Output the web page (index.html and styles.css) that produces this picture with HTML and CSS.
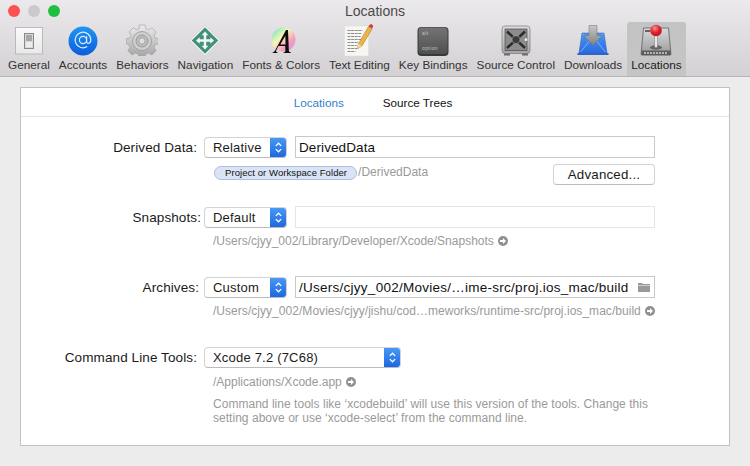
FILE: index.html
```html
<!DOCTYPE html>
<html lang="en">
<head>
<meta charset="utf-8">
<title>Locations</title>
<link rel="stylesheet" href="styles.css">
</head>
<body>
<div class="window">
  <header class="titlebar">
    <div class="title-row">
      <div class="lights"><span class="light red"></span><span class="light grey"></span><span class="light green"></span></div>
      <div class="title">Locations</div>
    </div>
    <nav class="toolbar">
      <div class="tool">
        <svg class="icon" viewBox="0 0 32 32"><defs><linearGradient id="gs" x1="0" y1="0" x2="0" y2="1"><stop offset="0" stop-color="#fafafa"/><stop offset="1" stop-color="#e9e9e9"/></linearGradient></defs><rect x="2.500" y="3.500" width="27" height="26.500" fill="url(#gs)" stroke="#b9b9b9"/><rect x="11.500" y="9.500" width="9" height="15" fill="#d8d8d8" stroke="#8a8a8a"/><rect x="13" y="11" width="6" height="6.500" fill="#a8a8a8"/><rect x="13" y="17.500" width="6" height="5.500" fill="#ececec"/></svg>
        <span>General</span>
      </div>
      <div class="tool">
        <svg class="icon" viewBox="0 0 32 32"><defs><linearGradient id="ga" x1="0" y1="0" x2="0" y2="1"><stop offset="0" stop-color="#1f95f2"/><stop offset="1" stop-color="#0a5edb"/></linearGradient></defs><circle cx="16" cy="17" r="14.500" fill="url(#ga)"/><circle cx="16" cy="16" r="3.600" fill="none" stroke="#dcecff" stroke-width="1.200"/><path d="M19.600 12.300v5.200c0 2.800 4.200 2.400 4.200-1.500a7.800 7.800 0 1 0-3.600 6.600" fill="none" stroke="#dcecff" stroke-width="1.200"/></svg>
        <span>Accounts</span>
      </div>
      <div class="tool">
        <svg class="icon" viewBox="0 0 32 32"><defs><linearGradient id="gb" x1="0" y1="0" x2="0" y2="1"><stop offset="0" stop-color="#ececec"/><stop offset="1" stop-color="#a6a6a6"/></linearGradient></defs><path d="M13 2.500h6l.8 3.700 2.900 1.200 3.200-2 4.200 4.200-2 3.200 1.200 2.900 3.700.8v4.800l-3.700.8-1.200 2.900 2 3.200-4.200 4.200-3.200-2-2.900 1.200-.8 2.400h-6l-.8-2.400-2.900-1.200-3.200 2-4.200-4.200 2-3.200-1.200-2.900L.200 21.100v-4.800l3.700-.8 1.200-2.900-2-3.200 4.200-4.200 3.200 2 2.900-1.200z" fill="url(#gb)" stroke="#8f8f8f" stroke-width=".5" transform="translate(0 -1.500)"/><circle cx="16" cy="17" r="9.500" fill="#cfcfcf" stroke="#979797" stroke-width=".8"/><circle cx="16" cy="17" r="6" fill="#bcbcbc" stroke="#8f8f8f" stroke-width=".8"/><circle cx="16" cy="17" r="3.200" fill="#dedede" stroke="#9a9a9a" stroke-width=".8"/></svg>
        <span>Behaviors</span>
      </div>
      <div class="tool">
        <svg class="icon" viewBox="0 0 32 32"><path d="M16 1 31.500 16.500 16 32 .5 16.500z" fill="#f4f4f4" stroke="#c4c4c4" stroke-width=".5"/><path d="M16 3.200 29.300 16.500 16 29.800 2.700 16.500z" fill="#44917a"/><path d="M16 7.500l3.300 3.700h-2.100v4.100h4.100v-2.100l3.700 3.300-3.700 3.300v-2.100h-4.100v4.100h2.100L16 25.500l-3.300-3.700h2.100v-4.100h-4.100v2.100L7 16.500l3.700-3.300v2.100h4.100v-4.100h-2.100z" fill="#f0f8f5"/></svg>
        <span>Navigation</span>
      </div>
      <div class="tool">
        <svg class="icon" viewBox="0 0 32 32"><defs><linearGradient id="gc" x1="0" y1="0" x2="1" y2="1"><stop offset="0" stop-color="#52e6c6"/><stop offset=".4" stop-color="#f9f5b4"/><stop offset=".7" stop-color="#f79ac0"/><stop offset="1" stop-color="#c3a2f2"/></linearGradient></defs><circle cx="18.500" cy="15.500" r="12" fill="url(#gc)"/><path d="M6 29c2.200 0 3-1 4.500-3.200L21 6h2l.8 20c0 1.500.6 2.200 2.200 2.400V29h-7.500v-.6c1.500-.1 1.900-.8 1.900-2.200l-.2-4.200h-6.700l-2.100 4c-.7 1.500-.2 2.300 1.300 2.400v.6zm9.300-8.500h5.300l-.3-8.700z" fill="#0d0d0d"/></svg>
        <span>Fonts &amp; Colors</span>
      </div>
      <div class="tool">
        <svg class="icon" viewBox="0 0 32 32"><rect x="1.500" y="2" width="24" height="30" fill="#f6f6f2" stroke="#dcdcdc" stroke-width=".5"/><path d="M4.500 6.500h15M4.500 9.500h14M4.500 12.500h13M4.500 15.500h14M4.500 18.500h11M4.500 21.500h9M4.500 24.500h11M4.500 27.500h8" stroke="#8c8c8c" stroke-width="1" stroke-dasharray="3 .6"/><path d="M14 25l1.500-5.500L25.500 2.500l3.700 2.200L19 22z" fill="#e9b445" stroke="#a9781c" stroke-width=".5"/><path d="M14 25l1.500-5.500 3.500 2.500z" fill="#ead4ad"/><path d="M25.500 2.500l1-1.500c.6-1 1.500-1 2.500-.5s1.300 1.500.8 2.500l-.8 1.500z" fill="#cf3d45"/></svg>
        <span>Text Editing</span>
      </div>
      <div class="tool">
        <svg class="icon" viewBox="0 0 32 32"><defs><linearGradient id="gd" x1="0" y1="0" x2="0" y2="1"><stop offset="0" stop-color="#747474"/><stop offset="1" stop-color="#505050"/></linearGradient></defs><rect x=".5" y="3" width="31" height="29" rx="4" fill="#3a3a3a"/><rect x="1.500" y="3.500" width="29" height="26.500" rx="3.500" fill="url(#gd)"/><text class="key" x="5" y="10.500">alt</text><text class="key" x="5" y="25.500">option</text></svg>
        <span>Key Bindings</span>
      </div>
      <div class="tool">
        <svg class="icon" viewBox="0 0 32 32"><defs><linearGradient id="ge" x1="0" y1="0" x2="0" y2="1"><stop offset="0" stop-color="#dedede"/><stop offset="1" stop-color="#a5a5a5"/></linearGradient></defs><rect x="2" y="2" width="28" height="27.500" rx="3" fill="url(#ge)" stroke="#7a7a7a" stroke-width=".7"/><rect x="5" y="5" width="22" height="21.500" fill="#8c8c8c" stroke="#4c4c4c" stroke-width=".7"/><path d="M7 7.500l18 16.500M25 7.500 7 24" stroke="#2a2a2a" stroke-width="2.400"/><circle cx="16" cy="15.700" r="4" fill="#3b3b3b" stroke="#bbb" stroke-width=".5"/><circle cx="26" cy="15.700" r="1.400" fill="#f0f0f0"/><rect x="4" y="29.500" width="6" height="2" fill="#6a6a6a"/><rect x="22" y="29.500" width="6" height="2" fill="#6a6a6a"/></svg>
        <span>Source Control</span>
      </div>
      <div class="tool">
        <svg class="icon" viewBox="0 0 32 32"><defs><linearGradient id="gf" x1="0" y1="0" x2="0" y2="1"><stop offset="0" stop-color="#4b95f5"/><stop offset="1" stop-color="#2b6be0"/></linearGradient><linearGradient id="gg" x1="0" y1="0" x2="0" y2="1"><stop offset="0" stop-color="#c8c8c8"/><stop offset="1" stop-color="#808080"/></linearGradient></defs><path d="M5 9h22l3 20H2z" fill="url(#gf)" stroke="#2a62bf" stroke-width=".5"/><path d="M6 10l10 10L26 10M3.500 28l9-11M28.500 28l-9-11" fill="none" stroke="#93bef8" stroke-width=".8"/><path d="M.5 29h31v2H.5z" fill="#2b66c9"/><path d="M12 1.500h8v10h5l-9 10-9-10h5z" fill="url(#gg)" stroke="#6f6f6f" stroke-width=".5"/></svg>
        <span>Downloads</span>
      </div>
      <div class="tool selected">
        <svg class="icon" viewBox="0 0 32 32"><defs><radialGradient id="gh" cx=".4" cy=".3" r=".8"><stop offset="0" stop-color="#f79090"/><stop offset=".5" stop-color="#e3202f"/><stop offset="1" stop-color="#a01020"/></radialGradient><linearGradient id="gi" x1="0" y1="0" x2="0" y2="1"><stop offset="0" stop-color="#dadada"/><stop offset="1" stop-color="#9a9a9a"/></linearGradient></defs><path d="M3.500 4h25l2.500 26.500H1z" fill="url(#gi)" stroke="#4f4f4f" stroke-width=".7"/><path d="M1.500 26.500h29v5h-29z" fill="#5c5c5c"/><path d="M4 29h24" stroke="#d0d0d0" stroke-width="1.400" stroke-dasharray="2 1"/><ellipse cx="16" cy="23.500" rx="6" ry="2.200" fill="#666"/><rect x="14.800" y="9" width="2.400" height="14.500" fill="#e8e8e8" stroke="#777" stroke-width=".4"/><circle cx="16" cy="6.500" r="5.800" fill="url(#gh)"/><path d="M5 7h5" stroke="#3d3d3d" stroke-width="1.500"/></svg>
        <span>Locations</span>
      </div>
    </nav>
  </header>

  <main class="content">
    <section class="panel">
      <div class="tabs"><span class="tab active">Locations</span><span class="tab">Source Trees</span></div>
      <div class="form">
        <div class="row derived">
          <label class="label">Derived Data:</label>
          <div class="select short"><span class="select-text">Relative</span><span class="stepper"><svg viewBox="0 0 10 14"><path d="M2.500 5.500 5 3l2.500 2.500M2.500 8.500 5 11l2.500-2.500" fill="none" stroke="#fff" stroke-width="1.200"/></svg></span></div>
          <div class="field">DerivedData</div>
          <div class="sub derived-sub"><span class="token">Project or Workspace Folder</span><span class="token-path">/DerivedData</span><button class="btn">Advanced...</button></div>
        </div>
        <div class="row">
          <label class="label wide">Snapshots:</label>
          <div class="select short"><span class="select-text">Default</span><span class="stepper"><svg viewBox="0 0 10 14"><path d="M2.500 5.500 5 3l2.500 2.500M2.500 8.500 5 11l2.500-2.500" fill="none" stroke="#fff" stroke-width="1.200"/></svg></span></div>
          <div class="field disabled"></div>
          <div class="sub path">/Users/cjyy_002/Library/Developer/Xcode/Snapshots<svg class="go" viewBox="0 0 10 10"><circle cx="5" cy="5" r="5" fill="#909090"/><path d="M2 4h3V2l3 3-3 3V6H2z" fill="#fff"/></svg></div>
        </div>
        <div class="row">
          <label class="label mid">Archives:</label>
          <div class="select short"><span class="select-text">Custom</span><span class="stepper"><svg viewBox="0 0 10 14"><path d="M2.500 5.500 5 3l2.500 2.500M2.500 8.500 5 11l2.500-2.500" fill="none" stroke="#fff" stroke-width="1.200"/></svg></span></div>
          <div class="field with-icon"><span>/Users/cjyy_002/Movies/…ime-src/proj.ios_mac/build</span><svg class="folder" viewBox="0 0 12 10"><path d="M0 1h4l1 1h7v1H0zM0 3.500h12V10H0z" fill="#9a9a9a"/></svg></div>
          <div class="sub path long-path">/Users/cjyy_002/Movies/cjyy/jishu/cod…meworks/runtime-src/proj.ios_mac/build<svg class="go" viewBox="0 0 10 10"><circle cx="5" cy="5" r="5" fill="#909090"/><path d="M2 4h3V2l3 3-3 3V6H2z" fill="#fff"/></svg></div>
        </div>
        <div class="row tools">
          <label class="label">Command Line Tools:</label>
          <div class="select long"><span class="select-text">Xcode 7.2 (7C68)</span><span class="stepper"><svg viewBox="0 0 10 14"><path d="M2.500 5.500 5 3l2.500 2.500M2.500 8.500 5 11l2.500-2.500" fill="none" stroke="#fff" stroke-width="1.200"/></svg></span></div>
          <div class="sub path tools-path">/Applications/Xcode.app<svg class="go" viewBox="0 0 10 10"><circle cx="5" cy="5" r="5" fill="#909090"/><path d="M2 4h3V2l3 3-3 3V6H2z" fill="#fff"/></svg></div>
          <p class="sub note">Command line tools like ‘xcodebuild’ will use this version of the tools. Change this setting above or use ‘xcode-select’ from the command line.</p>
        </div>
      </div>
    </section>
  </main>
</div>
</body>
</html>
```

FILE: styles.css
```css
* { box-sizing: border-box; }
html, body { margin: 0; padding: 0; }
body { width: 750px; height: 466px; overflow: hidden; background: #ececec; font-family: "Liberation Sans", Arial, sans-serif; color: #1c1c1c; }
.window { width: 750px; height: 466px; display: flex; flex-direction: column; background: #ececec; }

.titlebar { height: 77px; background: linear-gradient(#ebe9eb, #d3d1d3); border-bottom: 1px solid #b4b4b4; border-radius: 5px 5px 0 0; }
.title-row { height: 22px; display: flex; align-items: center; padding-left: 8px; position: relative; }
.lights { display: flex; gap: 8px; }
.light { width: 12px; height: 12px; border-radius: 50%; }
.red { background: #fb5150; }
.grey { background: #cbc9cb; }
.green { background: #1fc03f; }
.title { position: absolute; left: 0; right: 0; top: 3px; text-align: center; font-size: 14px; color: #4a4a4a; }

.toolbar { display: flex; padding-left: 3.5px; height: 54px; }
.tool { display: flex; flex-direction: column; align-items: center; padding: 2px 4.5px 0; font-size: 11.770px; color: #333; white-space: nowrap; }
.tool .icon { width: 32px; height: 32px; margin-bottom: 2px; flex: none; }
.tool span { line-height: 14px; }
.key { font-size: 5px; fill: #c4c4c4; font-family: "Liberation Sans", Arial, sans-serif; letter-spacing: .4px; }
.selected { background: linear-gradient(#c4c3c4, #c6c5c6); border-radius: 3px 3px 0 0; color: #1a1a1a; }

.content { flex: 1; padding: 10px 20px 20px; }
.panel { width: 710px; height: 359px; background: #fff; border: 1px solid #c2c2c2; }
.tabs { height: 29px; border-bottom: 1px solid #e6e6e6; display: flex; justify-content: center; align-items: center; gap: 39px; font-size: 11.700px; color: #111; padding-right: 4px; }
.tab.active { color: #2f7fd0; }

.form { padding-top: 19px; }
.row { display: grid; height: 70px; grid-template-columns: 175px 83px 360px; column-gap: 8px; align-items: center; align-content: start; }
.label { font-size: 13.500px; letter-spacing: .1px; text-align: right; white-space: nowrap; color: #1a1a1a; margin-right: -1px; }
.label.wide { margin-right: -5px; }
.label.mid { margin-right: -3px; }
.select { height: 21px; background: #fff; border: 1px solid #d3d3d3; border-bottom-color: #bcbcbc; border-radius: 4px; display: flex; justify-content: space-between; font-size: 13px; overflow: hidden; }
.select.long { grid-column: 2 / 4; width: 197px; }
.select-text { padding-left: 8px; line-height: 20px; letter-spacing: .2px; }
.stepper { width: 17px; margin: -1px -1px -1px 0; background: linear-gradient(#4a9bf6, #1c65e0); display: flex; align-items: center; justify-content: center; }
.stepper svg { width: 11px; height: 15px; }
.field { height: 22px; border: 1px solid #c9c9c9; font-size: 13.500px; padding: 0 3px; line-height: 21px; white-space: nowrap; color: #111; letter-spacing: .1px; }
.field.disabled { border-color: #e6e6e6; }
.field.with-icon { display: flex; justify-content: space-between; align-items: center; padding-right: 4px; letter-spacing: .26px; }
.folder { width: 12px; height: 10px; flex: none; }
.sub { grid-column: 2 / 4; font-size: 12px; color: #9a9a9a; }
.derived-sub { display: flex; align-items: flex-start; height: 27px; padding-left: 10px; }
.token { margin-top: 8px; background: #dae4f5; border: 1px solid #a9bfe3; border-radius: 7px; height: 14px; font-size: 9.500px; line-height: 12px; padding: 0 9px 0 10px; color: #111; letter-spacing: .07px; white-space: nowrap; }
.token-path { margin-top: 7px; line-height: 14px; margin-left: 1px; }
.btn { margin-left: auto; margin-top: 6px; width: 102px; height: 21px; background: #fff; border: 1px solid #d3d3d3; border-bottom-color: #bcbcbc; border-radius: 4px; font: 13.300px "Liberation Sans", Arial, sans-serif; color: #1a1a1a; padding: 0; letter-spacing: .2px; }
.path { padding-left: 9px; margin-top: 6px; line-height: 14px; display: flex; align-items: center; }
.long-path { letter-spacing: .04px; }
.tools-path { margin-top: 7px; }
.go { width: 10px; height: 10px; margin-left: 4px; flex: none; }
.note { margin: 8px 0 0; padding-left: 9px; line-height: 14px; width: 450px; letter-spacing: .03px; }
.tools { margin-top: 1px; }
```
